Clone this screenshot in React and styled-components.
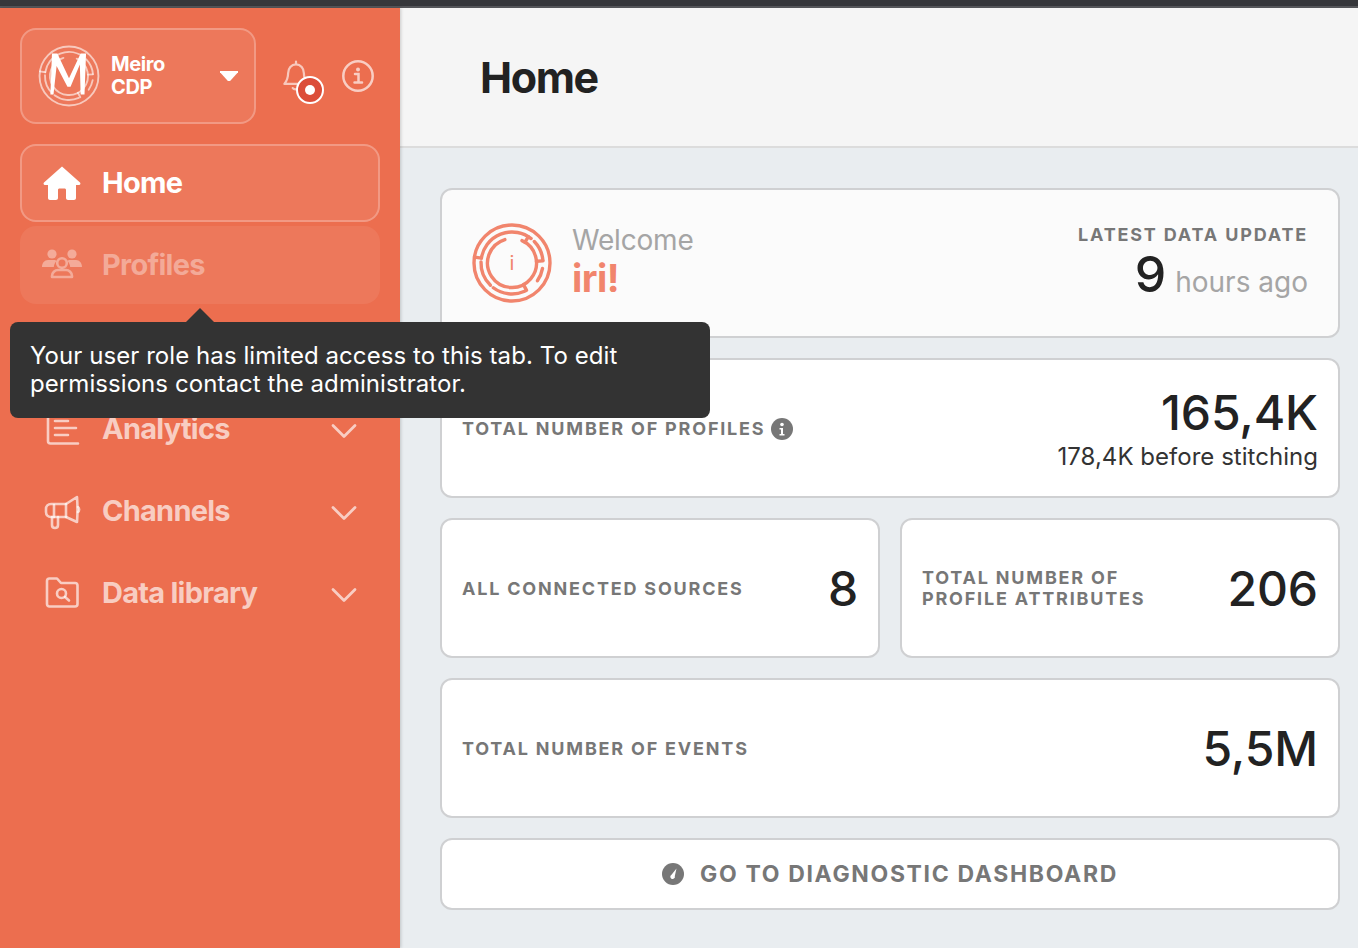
import React from "react";
import styled, { createGlobalStyle } from "styled-components";

const Global = createGlobalStyle`
  html, body { margin: 0; padding: 0; height: 100%; overflow: hidden; }
  body { font-family: Inter, "Liberation Sans", sans-serif; background: #e9edf0; -webkit-font-smoothing: antialiased; }
`;

const Page = styled.div`display:flex;flex-direction:column;height:948px;width:1358px;overflow:hidden;`;
const TopStrip = styled.div`height:6px;background:#36373b;border-bottom:2px solid #55565a;flex:none;`;
const Body = styled.div`display:flex;flex:1;min-height:0;position:relative;`;
const Sidebar = styled.aside`
  width:400px;flex:none;background:#ec6e4f;padding:20px 20px 0;box-sizing:border-box;
  box-shadow:1px 0 3px rgba(0,0,0,.18);z-index:1;
`;
const SideTop = styled.div`display:flex;align-items:center;`;
const Switcher = styled.div`
  width:236px;height:96px;box-sizing:border-box;border:2px solid rgba(255,255,255,.25);border-radius:16px;
  background:rgba(255,255,255,.07);display:flex;align-items:center;padding:0 16px;color:#fff;
`;
const BrandText = styled.div`font-size:20px;font-weight:650;line-height:23px;margin-left:11px;flex:1;letter-spacing:-.4px;`;
const Caret = styled.div`
  width:18px;height:10px;background:#fff;clip-path:polygon(0 0,100% 0,100% 12%,56% 100%,44% 100%,0 12%);
`;
const BellWrap = styled.div`position:relative;width:26px;height:34px;margin:-1px 0 0 27px;`;
const Dot = styled.div`
  position:absolute;left:13px;top:17px;width:28px;height:28px;box-sizing:border-box;border-radius:50%;
  background:#dc4d39;border:2px solid #fff;display:flex;align-items:center;justify-content:center;
  &::after{content:"";width:10px;height:10px;border-radius:50%;background:#fff;}
`;
const InfoWrap = styled.div`margin-left:33px;display:flex;`;
const Nav = styled.nav`display:flex;flex-direction:column;gap:4px;margin-top:20px;`;
const Item = styled.div`
  height:78px;box-sizing:border-box;border-radius:16px;display:flex;align-items:center;padding:0 21px 0 20px;
  font-size:29px;font-weight:650;letter-spacing:-.75px;
  color:${p => p.$active ? "#fff" : p.$muted ? "rgba(255,255,255,.38)" : "rgba(255,255,255,.66)"};
  border:2px solid ${p => p.$active ? "rgba(255,255,255,.25)" : "transparent"};
  background:${p => p.$active || p.$muted ? "rgba(255,255,255,.07)" : "transparent"};
`;
const ItemIcon = styled.span`width:40px;height:40px;display:flex;align-items:center;justify-content:center;margin-right:20px;flex:none;`;
const ItemLabel = styled.span`flex:1;margin-top:-1px;`;
const ChevronBox = styled.span`display:flex;margin-top:3px;`;
const NavGap = styled.div`height:78px;`;

const Tooltip = styled.div`
  position:absolute;left:10px;top:314px;width:700px;height:96px;box-sizing:border-box;background:#333;color:#fff;
  border-radius:8px;padding:20px;font-size:24px;line-height:28px;z-index:5;letter-spacing:.07px;
  &::before{content:"";position:absolute;left:176px;top:-14px;border-left:14px solid transparent;border-right:14px solid transparent;border-bottom:14px solid #333;}
`;

const Main = styled.main`flex:1;min-width:0;display:flex;flex-direction:column;`;
const Header = styled.header`
  height:140px;box-sizing:border-box;background:#f5f5f5;border-bottom:2px solid #dcdcdc;padding:0 80px;display:flex;align-items:center;flex:none;
`;
const Title = styled.h1`margin:0;font-size:43px;font-weight:700;color:#222;letter-spacing:-1.4px;`;
const Content = styled.div`padding:40px 18px 0 40px;display:flex;flex-direction:column;gap:20px;`;
const Card = styled.section`
  box-sizing:border-box;height:${p => p.$h}px;background:${p => p.$bg || "#fff"};border:2px solid #cfd0d2;border-radius:12px;
  display:flex;align-items:center;justify-content:space-between;padding:0 20px;flex:${p => p.$grow ? 1 : "none"};
`;
const WelcomeCard = styled(Card)`padding:0 30px;`;
const Row = styled.div`display:flex;gap:20px;`;
const Greeting = styled.div`display:flex;align-items:center;gap:20px;`;
const GreetingText = styled.div`margin-top:-6px;`;
const WelcomeText = styled.div`font-size:28px;line-height:36px;color:#a5a5a5;font-weight:400;letter-spacing:-.2px;`;
const Name = styled.div`font-size:38px;line-height:40px;font-weight:700;color:#f1856d;letter-spacing:-.5px;`;
const Update = styled.div`text-align:right;margin-top:-3px;`;
const UpdateHead = styled.div`font-size:18px;font-weight:700;letter-spacing:1.83px;color:#777;line-height:22px;`;
const UpdateValue = styled.div`display:flex;justify-content:flex-end;align-items:baseline;gap:9px;margin-top:2px;font-size:28px;color:#a5a5a5;`;
const UpdateNum = styled.span`font-size:50px;line-height:52px;font-weight:520;color:#222;`;
const Label = styled.div`
  font-size:18px;line-height:21px;font-weight:700;letter-spacing:1.8px;color:#777;display:flex;align-items:center;gap:6px;
`;
const Big = styled.div`font-size:48px;font-weight:520;color:#222;line-height:56px;letter-spacing:-.1px;margin-top:1px;`;
const Stack = styled.div`text-align:right;`;
const Sub = styled.div`font-size:24px;line-height:30px;color:#333;margin-top:1px;letter-spacing:.03px;`;
const TopLabel = styled(Label)`margin-top:1px;`;
const Action = styled(Card)`justify-content:center;gap:16px;font-size:23px;font-weight:700;letter-spacing:1.65px;color:#777;`;

const Icon = ({ size = 40, children, ...p }) => (
  <svg width={size} height={size} viewBox="0 0 40 40" fill="none" stroke="currentColor" strokeWidth="2.6" strokeLinecap="round" strokeLinejoin="round" {...p}>{children}</svg>
);

const polar = (cx, cy, r, a) => [cx + r * Math.cos((a - 90) * Math.PI / 180), cy + r * Math.sin((a - 90) * Math.PI / 180)];
const arc = (r, a, b) => {
  const [x1, y1] = polar(40, 40, r, a);
  const [x2, y2] = polar(40, 40, r, b);
  return `M${x1.toFixed(2)} ${y1.toFixed(2)}A${r} ${r} 0 ${b - a > 180 ? 1 : 0} 1 ${x2.toFixed(2)} ${y2.toFixed(2)}`;
};
const spoke = (r1, r2, a) => {
  const [x1, y1] = polar(40, 40, r1, a);
  const [x2, y2] = polar(40, 40, r2, a);
  return `M${x1.toFixed(2)} ${y1.toFixed(2)}L${x2.toFixed(2)} ${y2.toFixed(2)}`;
};
const mazeArcs = [[31, -81, 38], [31, 46, 85], [31, 100, 125], [31, 156, 217], [31, 224, 272], [24.5, 24, 343]];
const mazeSpokes = [[24.5, 31, 32], [24.5, 31, 86], [24.5, 31, 152], [31, 38, 279]];

const Maze = ({ size, color, sw = 1, children }) => (
  <svg width={size} height={size} viewBox="0 0 80 80" fill="none" stroke={color} strokeWidth={sw} strokeLinecap="round" style={{ flex: "none" }}>
    <circle cx="40" cy="40" r="38" />
    {mazeArcs.map(([r, a, b]) => <path key={`${r}-${a}`} d={arc(r, a, b)} />)}
    {mazeSpokes.map(([r1, r2, a]) => <path key={a} d={spoke(r1, r2, a)} />)}
    {children}
  </svg>
);

const HomeIcon = () => (
  <svg width="38" height="34" viewBox="0 0 38 34" fill="#fff">
    <path d="M19 0.500L37 16.500c.8.800.6 2.500-1 2.500h-3v13c0 1.200-.8 2-2 2h-6c-1.100 0-2-.8-2-2v-8c0-1-.7-1.500-1.500-1.500h-5c-.8 0-1.500.5-1.500 1.500v8c0 1.200-.9 2-2 2H7c-1.200 0-2-.8-2-2V19H2c-1.600 0-1.800-1.700-1-2.500z" />
  </svg>
);
const PeopleIcon = () => (
  <Icon>
    <g fill="currentColor" stroke="none">
      <circle cx="10" cy="9" r="4.600" /><circle cx="30" cy="9" r="4.600" />
      <path d="M0 22c0-4 2.500-7 6-7h6c1 0 2 .3 2.500 1-1.500 1.500-2.500 3.500-2.700 6zM40 22c0-4-2.500-7-6-7h-6c-1 0-2 .3-2.500 1 1.500 1.500 2.500 3.500 2.700 6z" />
    </g>
    <circle cx="20" cy="18" r="4.800" />
    <path d="M10 32v-1c0-3.500 3-6 6-6h8c3 0 6 2.500 6 6v1zM10 32h20" />
  </Icon>
);
const ReportIcon = () => (
  <Icon><path d="M6 6v26c0 1.500 1 2.500 2.500 2.500H36M13 12h13M13 19h21M13 26h13" /></Icon>
);
const MegaIcon = () => (
  <Icon>
    <path d="M35 6L24 13H9c-3 0-5 2-5 5v3c0 3 2 5 5 5h15l11 5c.6-8 .6-17 0-25z" />
    <path d="M12 14v12M24 13v13M10 26v8c0 2 1.500 3 3 3s3-1 3-3v-8M36 16c1.500 1 1.500 4 0 5" />
  </Icon>
);
const FolderIcon = () => (
  <Icon>
    <path d="M5 8c0-1.500 1-2.500 2.500-2.500H15L19 10h14c1.500 0 2.500 1 2.500 2.500V31c0 1.500-1 2.500-2.500 2.500H7.500C6 33.500 5 32.500 5 31z" />
    <circle cx="19.500" cy="20.500" r="4.500" /><path d="M23 24l4 3.500" />
  </Icon>
);
const Chevron = () => (
  <svg width="26" height="16" viewBox="0 0 26 16" fill="none" stroke="currentColor" strokeWidth="2.800" strokeLinecap="round" strokeLinejoin="round"><path d="M2 2.500l11 11 11-11" /></svg>
);
const BellIcon = () => (
  <svg width="26" height="34" viewBox="0 0 28 34" fill="none" stroke="rgba(255,255,255,.62)" strokeWidth="2.400" strokeLinecap="round" strokeLinejoin="round">
    <path d="M14 1.500v3M5.500 14c0-5 3.500-9.500 8.500-9.500s8.500 4.500 8.500 9.500c0 6 2 9 4 11.500H1.500c2-2.500 4-5.500 4-11.500zM10.500 30c1 2 5 2 7 0" />
  </svg>
);
const InfoIcon = () => (
  <svg width="32" height="32" viewBox="0 0 32 32" fill="none" stroke="rgba(255,255,255,.66)" strokeWidth="2.500">
    <circle cx="16" cy="16" r="14.700" />
    <circle cx="16" cy="9.500" r="2" fill="rgba(255,255,255,.66)" stroke="none" />
    <path d="M13 14h3.500v8M12.500 22.500h7.500" strokeLinecap="round" />
  </svg>
);
const InfoDot = () => (
  <svg width="22" height="22" viewBox="0 0 22 22">
    <circle cx="11" cy="11" r="11" fill="#777" />
    <circle cx="11" cy="6.500" r="1.800" fill="#fff" />
    <path d="M8.500 10h3.500v6h1.500v1.500h-5V16H10v-4.500H8.500z" fill="#fff" />
  </svg>
);
const GaugeIcon = () => (
  <svg width="22" height="22" viewBox="0 0 22 22">
    <circle cx="11" cy="11" r="11" fill="#777" />
    <path d="M14.500 5.500L12.800 13a2.300 2.300 0 1 1-3.300-1.300z" fill="#fff" />
  </svg>
);

export default function App() {
  return (
    <Page>
      <Global />
      <TopStrip />
      <Body>
        <Sidebar>
          <SideTop>
            <Switcher>
              <Maze size={62} color="rgba(255,255,255,.6)" sw={2.4}>
                <path d="M16 64L18 11H25L40 43 55 11H62L60 64H55L54 25 42 54H38L24 27 20 64Z" fill="#fff" stroke="none" />
              </Maze>
              <BrandText>Meiro<br />CDP</BrandText>
              <Caret />
            </Switcher>
            <BellWrap><BellIcon /><Dot /></BellWrap>
            <InfoWrap><InfoIcon /></InfoWrap>
          </SideTop>
          <Nav>
            <Item $active><ItemIcon><HomeIcon /></ItemIcon><ItemLabel>Home</ItemLabel></Item>
            <Item $muted><ItemIcon><PeopleIcon /></ItemIcon><ItemLabel>Profiles</ItemLabel></Item>
            <NavGap />
            <Item><ItemIcon><ReportIcon /></ItemIcon><ItemLabel>Analytics</ItemLabel><ChevronBox><Chevron /></ChevronBox></Item>
            <Item><ItemIcon><MegaIcon /></ItemIcon><ItemLabel>Channels</ItemLabel><ChevronBox><Chevron /></ChevronBox></Item>
            <Item><ItemIcon><FolderIcon /></ItemIcon><ItemLabel>Data library</ItemLabel><ChevronBox><Chevron /></ChevronBox></Item>
          </Nav>
        </Sidebar>
        <Tooltip>Your user role has limited access to this tab. To edit<br />permissions contact the administrator.</Tooltip>
        <Main>
          <Header><Title>Home</Title></Header>
          <Content>
            <WelcomeCard $h={150} $bg="#fbfbfb">
              <Greeting>
                <Maze size={80} color="#f1856d" sw={3.4}>
                  <text x="40" y="47" textAnchor="middle" fontSize="20" fontFamily="Inter, sans-serif" fill="#f1856d" stroke="none">i</text>
                </Maze>
                <GreetingText>
                  <WelcomeText>Welcome</WelcomeText>
                  <Name>iri!</Name>
                </GreetingText>
              </Greeting>
              <Update>
                <UpdateHead>LATEST DATA UPDATE</UpdateHead>
                <UpdateValue><UpdateNum>9</UpdateNum>hours ago</UpdateValue>
              </Update>
            </WelcomeCard>
            <Card $h={140}>
              <TopLabel>TOTAL NUMBER OF PROFILES <InfoDot /></TopLabel>
              <Stack><Big>165,4K</Big><Sub>178,4K before stitching</Sub></Stack>
            </Card>
            <Row>
              <Card $h={140} $grow><Label>ALL CONNECTED SOURCES</Label><Big>8</Big></Card>
              <Card $h={140} $grow><Label>TOTAL NUMBER OF<br />PROFILE ATTRIBUTES</Label><Big>206</Big></Card>
            </Row>
            <Card $h={140}><Label>TOTAL NUMBER OF EVENTS</Label><Big>5,5M</Big></Card>
            <Action $h={72}><GaugeIcon />GO TO DIAGNOSTIC DASHBOARD</Action>
          </Content>
        </Main>
      </Body>
    </Page>
  );
}
